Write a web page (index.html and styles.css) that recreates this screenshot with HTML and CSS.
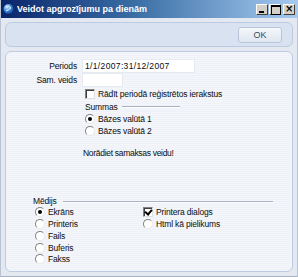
FILE: index.html
```html
<!DOCTYPE html>
<html lang="lv">
  <head>
    <meta charset="UTF-8" />
    <title>Veidot apgrozījumu pa dienām</title>
    <link rel="stylesheet" href="styles.css">
  </head>
  <body>
    <div class="window">
      <div class="titlebar">
        <svg class="appicon" width="11" height="12" viewBox="0 0 11 12">
          <defs>
            <radialGradient id="g" cx="0.35" cy="0.3" r="0.8">
              <stop offset="0" stop-color="#cfe6ff" />
              <stop offset="0.5" stop-color="#3a86d8" />
              <stop offset="1" stop-color="#0d3a8a" />
            </radialGradient>
          </defs>
          <circle cx="5.5" cy="6" r="5" fill="url(#g)" />
          <path d="M3 4 Q6 2 8 5 Q6 7 3 8" stroke="#e8f4ff" stroke-width="1" fill="none" />
        </svg>
        <span class="title">Veidot apgrozījumu pa dienām</span>
        <div class="wbtns">
          <span class="wbtn min"></span>
          <span class="wbtn max"></span>
          <span class="wbtn close">×</span>
        </div>
      </div>
      <div class="client">
        <div class="toolbar">
          <button class="ok">OK</button>
        </div>
        <div class="panel">
          <div class="row">
            <span class="label">Periods</span>
            <span class="field wide">1/1/2007:31/12/2007</span>
          </div>
          <div class="row">
            <span class="label">Sam. veids</span>
            <span class="field short"></span>
          </div>
          <div class="opts">
            <div class="opt chk"><span class="box"></span>Rādīt periodā reģistrētos ierakstus</div>
            <div class="group">
              <span>Summas</span><span class="rule"></span>
            </div>
            <div class="opt"><span class="radio on"></span>Bāzes valūtā 1</div>
            <div class="opt"><span class="radio"></span>Bāzes valūtā 2</div>
            <p class="note">Norādiet samaksas veidu!</p>
          </div>
          <div class="media">
            <div class="group">
              <span>Mēdijs</span><span class="rule"></span>
            </div>
            <div class="cols">
              <div class="col">
                <div class="opt"><span class="radio on"></span>Ekrāns</div>
                <div class="opt"><span class="radio"></span>Printeris</div>
                <div class="opt"><span class="radio"></span>Fails</div>
                <div class="opt"><span class="radio"></span>Buferis</div>
                <div class="opt"><span class="radio"></span>Fakss</div>
              </div>
              <div class="col">
                <div class="opt"><span class="box on"></span>Printera dialogs</div>
                <div class="opt"><span class="radio"></span>Html kā pielikums</div>
              </div>
            </div>
          </div>
        </div>
      </div>
    </div>
  </body>
</html>
```

FILE: styles.css
```css
* {
  margin: 0;
  padding: 0;
  box-sizing: border-box;
}

body {
  width: 298px;
  height: 277px;
  font-family: "Liberation Sans", Arial, sans-serif;
  font-size: 8.5px;
  letter-spacing: -0.15px;
  color: #0c0c0c;
  background: #c9cfd9;
  overflow: hidden;
}

.window {
  height: 277px;
  display: flex;
  flex-direction: column;
  background: #e3e8f1;
  border-left: 1px solid #b9c3d3;
  border-right: 1px solid #b9c3d3;
  border-bottom: 1px solid #a8b1c0;
}

.titlebar {
  height: 18px;
  flex-shrink: 0;
  display: flex;
  align-items: center;
  padding: 0 2px;
  background: linear-gradient(to right, #0a246a, #3a6ea5 45%, #a6caf0);
  color: white;

  > .appicon {
    margin-right: 3px;
  }

  > .title {
    font-weight: bold;
    font-size: 9px;
    letter-spacing: 0;
  }

  > .wbtns {
    margin-left: auto;
    display: flex;
    gap: 1px;
  }
}

.wbtn {
  width: 12px;
  height: 11px;
  background: #d4d0c8;
  border: 1px solid;
  border-color: #fff #404040 #404040 #fff;
  position: relative;
  color: #000;
  font-family: "DejaVu Sans", sans-serif;
  font-size: 10px;
  line-height: 8px;
  text-align: center;
  font-weight: bold;

  &.min::after {
    content: "";
    position: absolute;
    left: 2px;
    bottom: 1px;
    width: 5px;
    height: 2px;
    background: #000;
  }

  &.max::after {
    content: "";
    position: absolute;
    left: 1px;
    top: 0;
    width: 8px;
    height: 7px;
    border: 1px solid #000;
    border-top-width: 2px;
  }

  &.close {
    margin-left: 1px;
  }
}

.client {
  flex: 1;
  min-height: 0;
  display: flex;
  flex-direction: column;
  gap: 4px;
  padding: 4px;
}

.toolbar {
  height: 25px;
  flex-shrink: 0;
  display: flex;
  justify-content: flex-end;
  align-items: center;
  padding-right: 10px;
  border: 1px solid #bccbe2;
  border-radius: 6px;
  background: #d9e2f0;

  > .ok {
    width: 44px;
    height: 16px;
    font-family: "Liberation Sans", Arial, sans-serif;
    font-size: 9px;
    color: #3a4a5e;
    border: 1px solid #b9c6da;
    border-radius: 3px;
    background: linear-gradient(#f4f7fb, #dfe6f1);
  }
}

.panel {
  flex: 1;
  min-height: 0;
  overflow: hidden;
  padding-top: 7px;
  border: 1px solid #bccbe2;
  border-radius: 6px;
  background: repeating-linear-gradient(#f4f6fa 0 1px, #eef1f7 1px 2px);
}

.row {
  height: 14px;
  display: flex;
  align-items: center;

  > .label {
    width: 71px;
    margin-right: 5px;
    text-align: right;
  }
}

.field {
  height: 14px;
  padding: 1px 2px;
  line-height: 10px;
  letter-spacing: 0.35px;
  background: #fff;
  border: 1px solid #e6eaf1;

  &.wide {
    width: 113px;
  }

  &.short {
    width: 41px;
  }
}

.opt {
  height: 12px;
  display: flex;
  align-items: center;
  gap: 3px;
}

.box {
  width: 10px;
  height: 10px;
  flex-shrink: 0;
  background: #fff;
  border: 1px solid;
  border-color: #808080 #e0e0e0 #e0e0e0 #808080;
  box-shadow: inset 1px 1px 0 #404040;
  position: relative;

  &.on::after {
    content: "";
    position: absolute;
    left: 2px;
    top: 0;
    width: 3px;
    height: 5px;
    border: solid #000;
    border-width: 0 2px 2px 0;
    transform: rotate(40deg);
  }
}

.radio {
  width: 10px;
  height: 10px;
  flex-shrink: 0;
  border-radius: 50%;
  background: #fff;
  border: 1px solid;
  border-color: #808080 #e8e8e8 #e8e8e8 #808080;
  position: relative;

  &.on::after {
    content: "";
    position: absolute;
    left: 2px;
    top: 2px;
    width: 4px;
    height: 4px;
    border-radius: 50%;
    background: #000;
  }
}

.group {
  display: flex;
  align-items: center;
  gap: 4px;

  > .rule {
    flex: 1;
    height: 1px;
    background: #a9b2c2;
    box-shadow: 0 1px 0 #fff;
  }
}

.opts {
  margin-left: 79px;

  > .chk {
    height: 13px;
    margin-top: 0.5px;
  }

  > .group {
    width: 95px;
    height: 12px;
  }

  > .note {
    margin: 11px 0 0 -2px;
    line-height: 11px;
    letter-spacing: -0.3px;
  }
}

.media {
  margin: 37px 19px 0 27px;

  > .group {
    height: 11px;

    > .rule {
      margin-left: 2px;
    }
  }

  > .cols {
    display: flex;
    gap: 58px;
    margin-left: 2px;

    > .col {
      width: 50px;
    }

    > .col + .col {
      width: 110px;
    }
  }

  .opt {
    height: 11.75px;
  }
}
```
